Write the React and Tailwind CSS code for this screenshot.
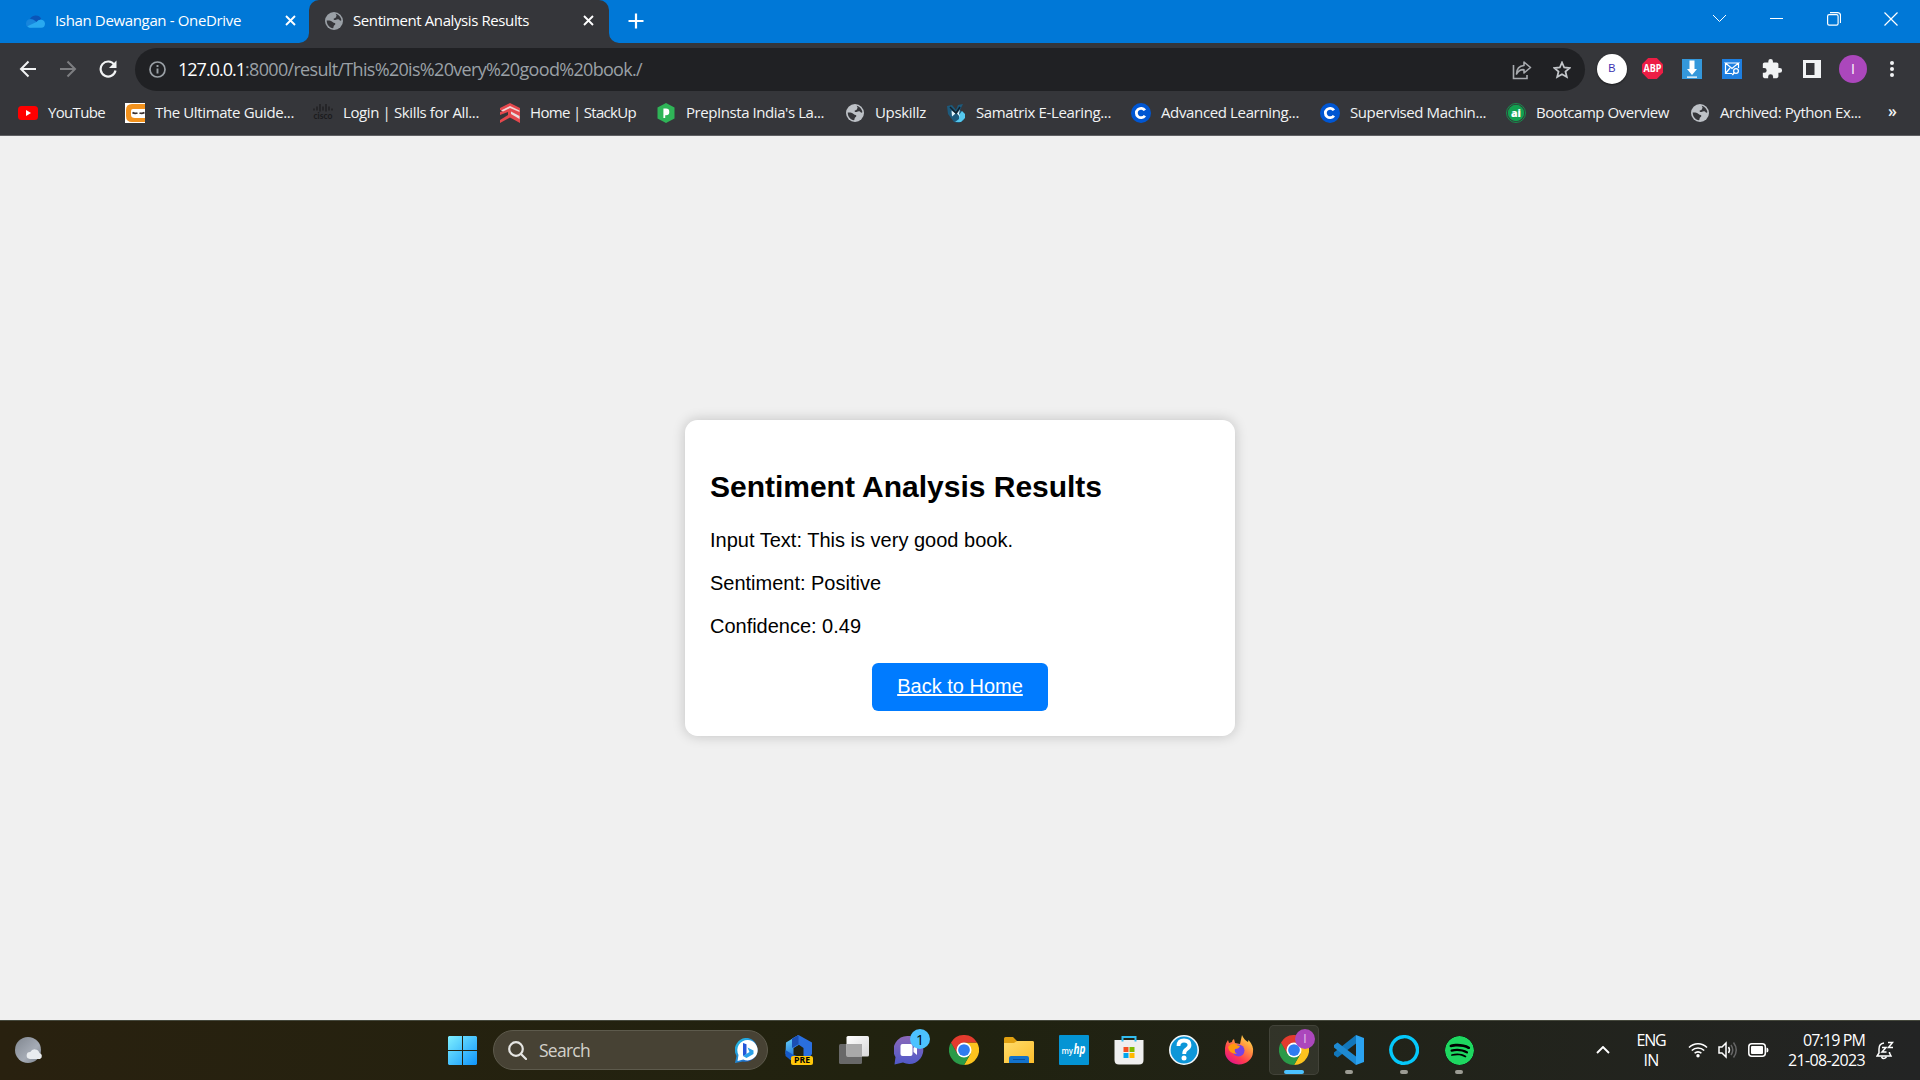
import React, { useLayoutEffect, useRef, useState } from "react";
import { SiSpotify } from "react-icons/si";

function Fit({ w, className = "", children }) {
  const ref = useRef(null);
  const [spacing, setSpacing] = useState(0);
  useLayoutEffect(() => {
    const el = ref.current;
    const n = el.textContent.length;
    if (n > 1) setSpacing((w - el.getBoundingClientRect().width) / n);
  }, [w]);
  return (
    <span ref={ref} className={"inline-block whitespace-pre " + className} style={{ letterSpacing: spacing }}>
      {children}
    </span>
  );
}

const Globe = ({ s = 19, color = "#bdc1c6" }) => (
  <svg width={s} height={s} viewBox="0 0 18 18">
    <circle cx="9" cy="9" r="9" fill={color} />
    <path d="M10.500 1.700c3 .6 5.600 3.200 5.900 6.600-.8.700-1.500.2-2.200-.6-1-.8-2.200-.6-3.200 0-.8.500-1.800.4-2.300-.3-.3-1 .6-1.300 1.600-1.500.6-.2.500-1 .9-1.500.7-.6.200-1.600-.7-2.700z" fill="#35363a" />
    <path d="M1.700 8.600c1.700 0 3.300 0 4.800.7 1 .5 1.300 1.300 2.300 1.400 1.200.1 1.700.6 1.500 1.600-.3 1-1.500 1-1.700 2.200-.1.700-.1 1.300-.6 1.800C4.500 15.900 1.700 12.800 1.700 8.600z" fill="#35363a" />
  </svg>
);

const Chrome = () => (
  <svg width="30" height="30" viewBox="0 0 48 48">
    <path d="M24 12H44.800A24 24 0 0 1 24 48L34.400 30Z" fill="#fcc31e" />
    <path d="M13.600 30 3.200 12A24 24 0 0 0 24 48L34.400 30Z" fill="#2a9a48" />
    <path d="M24 12H44.800A24 24 0 0 0 3.200 12L13.600 30Z" fill="#e33b2e" />
    <circle cx="24" cy="24" r="12" fill="#fff" />
    <circle cx="24" cy="24" r="9.400" fill="#2f7cf0" />
  </svg>
);

const CIcon = () => (
  <svg width="20" height="20" viewBox="0 0 20 20">
    <circle cx="10" cy="10" r="10" fill="#0056d2" />
    <path d="M13.900 7.300A4.700 4.700 0 1 0 13.900 12.700" fill="none" stroke="#fff" strokeWidth="2.800" />
  </svg>
);

const BOOKMARKS = [
  { t: "YouTube", w: 57, box: "w-[107px]", i: (
    <svg width="20" height="20" viewBox="0 0 20 20"><rect y="3" width="20" height="14" rx="3.500" fill="#f00" /><path d="M8 7v6l5-3z" fill="#fff" /></svg>) },
  { t: "The Ultimate Guide...", w: 139, box: "w-[188px]", i: (
    <svg width="20" height="20" viewBox="0 0 20 20"><rect width="20" height="20" fill="#fff" /><path d="M20 1H7Q1 1 1 7v6q0 6 6 6h13v-4H10q-4 0-4-3V8q0-2 2-2h12z" fill="#f2921d" /><path d="M7.500 9.500q2 1.500 5 .5M14.500 10q2.500 1 5-.5" stroke="#3a3030" strokeWidth="1.700" fill="none" /></svg>) },
  { t: "Login | Skills for All...", w: 136, box: "w-[187px]", i: (
    <svg width="20" height="20" viewBox="0 0 20 20"><path d="M1 5.500v2M4 3.500v4M7 1v7.500M10 3.500v4M13 1v7.500M16 3.500v4M19 5.500v2" stroke="#1b1b1d" strokeWidth="1.200" /><text x="0.500" y="15.500" fontSize="8.500" fontWeight="700" fill="#1b1b1d" fontFamily="Lato, sans-serif" textLength="19" lengthAdjust="spacingAndGlyphs">cisco</text></svg>) },
  { t: "Home | StackUp", w: 106, box: "w-[156px]", i: (
    <svg width="20" height="20" viewBox="0 0 20 20"><path d="M0 5 10 0l10 5v15L10 14.500 0 20v-3l8-5V9l-8 3V9l3-1-3-1z" fill="#e5484d" /><path d="M1 7.500 10 3l9.500 4.500v1.500L10 5 3 8.500z" fill="#f0d5d6" /><path d="M11 8.500l8.500 4.500v3l-8.500-5z" fill="#e8dcdd" /></svg>) },
  { t: "PrepInsta India's La...", w: 138, box: "w-[189px]", i: (
    <svg width="20" height="20" viewBox="0 0 20 20"><path d="m10 0 8.500 4.500v11L10 20l-8.500-4.500v-11z" fill="#2fb457" /><path d="M8.300 15V6.500H10a2.300 2.300 0 0 1 0 4.800H9" fill="#fff" stroke="#fff" strokeWidth="1.800" /></svg>) },
  { t: "Upskillz", w: 51, box: "w-[101px]", i: <Globe s={18} /> },
  { t: "Samatrix E-Learing...", w: 135, box: "w-[185px]", i: (
    <svg width="20" height="20" viewBox="0 0 20 20"><path d="M1 3l5-1 4 5 2-5 5-1-3 6 5 4-1 6-5 3-5-1-3-4-3-4z" fill="#1d5a7c" /><path d="M13 12l3-4 3 3v4l-4 4H9l4-3z" fill="#55c8ee" /><path d="M5.500 7.500l4 3-3.500 3zM14 6.500l-3 4 3 3.500-1-3.500z" fill="#e4f5fb" /><path d="M4 4l6 6 4-6" stroke="#14212b" strokeWidth="1.500" fill="none" /></svg>) },
  { t: "Advanced Learning...", w: 138, box: "w-[189px]", i: <CIcon /> },
  { t: "Supervised Machin...", w: 136, box: "w-[186px]", i: <CIcon /> },
  { t: "Bootcamp Overview", w: 133, box: "w-[184px]", i: (
    <svg width="20" height="20" viewBox="0 0 20 20"><circle cx="10" cy="10" r="9.500" fill="none" stroke="#12a150" strokeWidth=".8" /><circle cx="10" cy="10" r="8.200" fill="#12a150" /><text x="5" y="13.800" fontSize="11" fontWeight="800" fill="#fff" fontFamily="Open Sans, sans-serif" textLength="10" lengthAdjust="spacingAndGlyphs">ai</text></svg>) },
  { t: "Archived: Python Ex...", w: 141, box: "w-[192px]", i: <Globe s={18} /> },
];

const X = () => (
  <svg width="11" height="11" viewBox="0 0 11 11"><path d="M1 1l9 9M10 1l-9 9" stroke="#fff" strokeWidth="1.900" /></svg>
);

function TabStrip() {
  return (
    <div className="flex h-[43px] bg-[#0078d7] text-[15px] text-white">
      <div className="flex h-[43px] w-[309px] items-center pl-[26px] pb-[2px]">
        <svg width="19" height="14" viewBox="0 0 20 14"><path d="M4 5.500a6.500 6 0 0 1 12-1L10 9z" fill="#0a55b8" /><path d="M0 10a5 5 0 0 1 7.500-4.500L14 10l-8 4H4.500A4.300 4.300 0 0 1 0 10z" fill="#1785dc" /><path d="M1.500 12.500 11 8q2-2.500 4.800-2.200A4.500 4.500 0 0 1 20 9.500q0 4.500-4 4.500H4q-1.500 0-2.500-1.500z" fill="#29a9f0" /></svg>
        <span className="ml-[10px] w-[230px]"><Fit w={186}>Ishan Dewangan - OneDrive</Fit></span>
        <X />
      </div>
      <div className="relative flex h-[43px] w-[300px] items-center rounded-t-[10px] bg-[#35363a] pb-[2px] pl-[16px]">
        <svg className="absolute bottom-0 -left-[10px]" width="10" height="10"><path d="M10 0v10H0A10 10 0 0 0 10 0z" fill="#35363a" /></svg>
        <svg className="absolute bottom-0 -right-[10px]" width="10" height="10"><path d="M0 0v10h10A10 10 0 0 1 0 0z" fill="#35363a" /></svg>
        <Globe s={18} color="#9aa0a6" />
        <span className="ml-[10px] w-[230px]"><Fit w={176}>Sentiment Analysis Results</Fit></span>
        <X />
      </div>
      <div className="flex w-[54px] items-center justify-center pb-[1px]">
        <svg width="16" height="16"><path d="M8 0.500v15M.5 8h15" stroke="#fff" strokeWidth="2.200" /></svg>
      </div>
      <div className="ml-auto flex h-[37px] items-center">
        <span className="flex w-[57px] justify-center"><svg width="15" height="9" viewBox="0 0 15 9" fill="none" stroke="#fff"><path d="M1 1l6.500 6.500L14 1" /></svg></span>
        <span className="flex w-[57px] justify-center"><svg width="13" height="13" fill="none" stroke="#fff"><path d="M0 6.500h13" /></svg></span>
        <span className="flex w-[57px] justify-center"><svg width="14" height="14" fill="none" stroke="#fff" strokeWidth="1.200"><rect x=".6" y="2.600" width="10.500" height="10.500" rx="1.600" /><path d="M3 .6h7.500a3 3 0 0 1 3 3V11" /></svg></span>
        <span className="flex w-[58px] justify-center"><svg width="14" height="14" fill="none" stroke="#fff" strokeWidth="1.200"><path d="M.5.500l13 13M13.500.500l-13 13" /></svg></span>
      </div>
    </div>
  );
}

function Toolbar() {
  return (
    <div className="flex h-[48px] items-center pt-[5px]">
      <div className="flex w-[135px] items-center pl-[18.5px] pb-[2px]">
        <svg width="18" height="18" viewBox="0 0 18 18" fill="none" stroke="#f1f3f4" strokeWidth="2"><path d="M9.500 1.500 2 9l7.500 7.500M2 9h15" /></svg>
        <svg className="ml-[22px]" width="18" height="18" viewBox="0 0 18 18" fill="none" stroke="#7d7e81" strokeWidth="2"><path d="M8.500 1.500 16 9l-7.500 7.500M16 9H1" /></svg>
        <svg className="ml-[22px]" width="18" height="18" viewBox="0 0 18 18"><path d="M15.300 4.700A7.500 7.500 0 1 0 16.500 10.500" fill="none" stroke="#f1f3f4" strokeWidth="2.200" /><path d="M17.500.500v7.500H10z" fill="#f1f3f4" /></svg>
      </div>
      <div className="flex h-[43px] w-[1450px] items-center rounded-full bg-[#202124] pl-[14px] text-[18px]">
        <svg width="17" height="17" viewBox="0 0 17 17" fill="none" stroke="#9aa0a6" strokeWidth="1.700"><circle cx="8.500" cy="8.500" r="7.500" /><path d="M8.500 7.500v5M8.500 4v2" strokeWidth="1.900" /></svg>
        <div className="ml-[12px] pb-[1px]">
          <Fit w={67} className="text-white">127.0.0.1</Fit>
          <Fit w={397} className="text-[#9aa0a6]">:8000/result/This%20is%20very%20good%20book./</Fit>
        </div>
        <div className="ml-auto flex items-center gap-[21px] pr-[14px]">
          <svg width="20" height="20" viewBox="0 0 20 20" fill="none" stroke="#a8abaf" strokeWidth="1.600"><path d="M1.500 5v13.500H15V15" /><path d="M12 2l6.500 5.500L12 13v-3.300q-5-.4-7.500 4.300.3-8 7.500-8.500z" strokeLinejoin="round" /></svg>
          <svg width="18" height="18" viewBox="0 0 18 18" fill="none" stroke="#c4c7cb" strokeWidth="1.800"><path d="m9 1.500 2.200 5 5.500.5-4.200 3.600 1.300 5.400L9 13.200 4.200 16l1.300-5.400L1.300 7l5.500-.5z" /></svg>
        </div>
      </div>
      <div className="flex flex-1 items-center pb-[2px] pl-[12px]">
        <span className="flex h-[30px] w-[30px] items-center justify-center rounded-full bg-white font-['Liberation_Sans',sans-serif] text-[11px] text-[#3b2fb0] shadow-[0_1px_2px_rgba(0,0,0,0.5)]">B</span>
        <svg className="ml-[15px]" width="21" height="21" viewBox="0 0 21 21"><path d="M6.200 0h8.600L21 6.200v8.600L14.800 21H6.200L0 14.800V6.200z" fill="#ed1e45" /><text x="1.500" y="14.300" fontSize="10.500" fontWeight="700" fill="#fff" fontFamily="Open Sans, sans-serif" textLength="18" lengthAdjust="spacingAndGlyphs">ABP</text></svg>
        <svg className="ml-[19px]" width="20" height="20" viewBox="0 0 20 20"><rect width="20" height="20" fill="#3498db" /><path d="M7.500 1.500h5v8.500H15l-5 6-5-6h2.500zM5 17.500h10v1.300H5z" fill="#fff" /></svg>
        <svg className="ml-[20px]" width="20" height="20" viewBox="0 0 20 20"><rect width="20" height="20" fill="#1e7fe0" /><path d="M3.500 4h13l-6.500 5.500zM3.500 4v10.500H10M3.500 14.500l4.500-5.500M16.500 4v5" stroke="#fff" fill="none" strokeWidth="1.200" /><circle cx="14" cy="12" r="2.400" stroke="#fff" fill="none" strokeWidth="1.200" /><path d="M12.300 13.500l-2 2.500" stroke="#fff" strokeWidth="1.500" /></svg>
        <svg className="ml-[19px]" width="22" height="22" viewBox="0 0 24 24" fill="#f1f3f4"><path d="M20.500 11H19V7c0-1.100-.9-2-2-2h-4V3.500a2.500 2.500 0 0 0-5 0V5H4c-1.100 0-2 .9-2 2v3.800h1.500a2.700 2.700 0 0 1 0 5.400H2V20c0 1.100.9 2 2 2h3.800v-1.500a2.700 2.700 0 0 1 5.400 0V22H17c1.100 0 2-.9 2-2v-4h1.500a2.500 2.500 0 0 0 0-5z" /></svg>
        <svg className="ml-[20px]" width="18" height="18" viewBox="0 0 18 18"><path fillRule="evenodd" d="M0 0h18v18H0zM3 3v12h8.500V3z" fill="#f1f3f4" /></svg>
        <span className="ml-[18px] flex h-[28px] w-[28px] items-center justify-center rounded-full bg-[#ab47bc] text-[14px] text-white">I</span>
        <svg className="ml-[23px]" width="4" height="18"><circle cx="2" cy="3" r="2" fill="#f1f3f4" /><circle cx="2" cy="9" r="2" fill="#f1f3f4" /><circle cx="2" cy="15" r="2" fill="#f1f3f4" /></svg>
      </div>
    </div>
  );
}

function Bookmarks() {
  return (
    <div className="flex h-[45px] items-center border-b border-[#5f6063] pl-[18px] text-[15px] text-[#f1f3f4]">
      {BOOKMARKS.map((b) => (
        <div key={b.t} className={"flex shrink-0 items-center gap-[10px] " + b.box}>
          <span className="flex w-[20px] shrink-0 justify-center">{b.i}</span>
          <Fit w={b.w} className="pb-[2px]">{b.t}</Fit>
        </div>
      ))}
      <span className="ml-[6px] pb-[4px] text-[16px] font-semibold">»</span>
    </div>
  );
}

function Cell({ children, active, mark }) {
  return (
    <div className={"relative mr-[5px] flex h-[50px] w-[50px] shrink-0 items-center justify-center rounded-[5px] " + (active ? "border border-white/8 bg-white/8" : "")}>
      {children}
      {active && <span className="absolute bottom-0 h-[4px] w-[20px] rounded-full bg-[#4cc2ff]" />}
      {mark && <span className="absolute bottom-[1px] h-[4px] w-[8px] rounded-full bg-[#9c9c94]" />}
    </div>
  );
}

function Taskbar() {
  return (
    <div className="flex h-[60px] items-center border-t border-[#45483c] bg-linear-to-r from-[#29210f] via-[#20220f] to-[#232424] pb-[1px]">
      <div className="flex w-[448px] items-center pl-[15px]">
        <svg width="30" height="28" viewBox="0 0 30 28">
          <defs><linearGradient id="moon" x2="1" y2="1"><stop stopColor="#80868f" /><stop offset=".6" stopColor="#a5abb5" /><stop offset="1" stopColor="#7b828c" /></linearGradient></defs>
          <circle cx="13" cy="14" r="13" fill="url(#moon)" />
          <path d="M15 23a3.500 3.500 0 0 1 .3-7 5 5 0 0 1 9.200 1 3.200 3.200 0 0 1 .5 6z" fill="#e9ecef" />
        </svg>
      </div>
      <svg width="29" height="29" viewBox="0 0 29 29">
        <defs><linearGradient id="win" x2="1" y2="1"><stop stopColor="#7ff0ff" /><stop offset="1" stopColor="#0f94fb" /></linearGradient></defs>
        <path d="M1 0h13v14H0V1zM15 0h13l1 1v13H15zM0 15h14v14H1l-1-1zM15 15h14v13l-1 1H15z" fill="url(#win)" />
      </svg>
      <div className="ml-[16px] flex h-[40px] w-[275px] items-center rounded-full border border-[#5d5a4c] bg-[#474234] pl-[14px] pr-[7px]">
        <svg width="19" height="19" viewBox="0 0 19 19" fill="none" stroke="#e6e6e3" strokeWidth="2.200"><circle cx="8" cy="8" r="6.800" /><path d="M13 13l5 5" strokeLinecap="round" /></svg>
        <Fit w={51} className="ml-[12px] text-[17.5px] text-[#d3d1ca]">Search</Fit>
        <svg className="ml-auto" width="25" height="25" viewBox="0 0 25 25">
          <defs><linearGradient id="bing" x2="1" y2="1"><stop stopColor="#27c7e8" /><stop offset="1" stopColor="#1849c4" /></linearGradient></defs>
          <path d="M13 0a12 12 0 1 1-5 23.500L0 25l1.500-7A12 12 0 0 1 13 0z" fill="url(#bing)" />
          <path d="M12.800 2a10.200 10.200 0 1 1-4.500 19.500L2.500 23l1-6A10.200 10.200 0 0 1 12.800 2z" fill="#fff" />
          <path d="M8 5l3.500 1.200v10L8 18z" fill="#2456d8" /><path d="M12.500 9.500l6 3v3.500L11.500 20 8 18l6.500-4z" fill="#2a9fe8" />
        </svg>
      </div>
      <div className="ml-[6px] flex items-center">
        <Cell>
          <svg width="30" height="30" viewBox="0 0 30 30">
            <defs><linearGradient id="m3" x2=".3" y2="1"><stop stopColor="#6fe0fd" /><stop offset="1" stopColor="#1763d6" /></linearGradient></defs>
            <path d="M14.500 0 2 7.500 1.500 19l5 6 8 2 5-4-10-3V13l5-3z" fill="url(#m3)" />
            <path d="M14.500 0 8 3.500 9.500 13l5-3.500 5 3.500v9l4 3 4.500-6V7.500z" fill="#2a6fdf" />
            <path d="M14.500 0 8 4v9l6.500-4z" fill="#1b4fb4" />
            <path d="M1.500 15l8 5 5 3.500-1 3.500-7-2-5-4z" fill="#1559c8" />
            <rect x="7" y="21" width="22" height="9" rx="2" fill="#ffc60a" />
            <text x="10" y="28.400" fontSize="8" fontWeight="700" fontFamily="Open Sans, sans-serif" textLength="16" lengthAdjust="spacingAndGlyphs">PRE</text>
          </svg>
        </Cell>
        <Cell>
          <svg width="30" height="28" viewBox="0 0 30 28">
            <defs><linearGradient id="tv" x2="1" y2="1"><stop stopColor="#fff" /><stop offset="1" stopColor="#d8d8d8" /></linearGradient></defs>
            <rect x="0" y="8" width="23" height="20" rx="1.500" fill="#686868" /><rect x="7.500" y="0" width="22.500" height="20.500" rx="1.500" fill="url(#tv)" /><path d="M7.500 8H23v12.500H7.500z" fill="#a9a9a9" />
          </svg>
        </Cell>
        <Cell>
          <svg width="30" height="30" viewBox="0 0 30 30">
            <defs><linearGradient id="chat" x2="0" y2="1"><stop stopColor="#8b68b8" /><stop offset="1" stopColor="#5059c9" /></linearGradient></defs>
            <path d="M15 1a14 14 0 1 1-6 26.500L.5 29.500l1-7.500A14 14 0 0 1 15 1z" fill="url(#chat)" /><rect x="6.500" y="9" width="12" height="12" rx="2" fill="#fff" /><path d="M19.500 13l3.500-3v10l-3.500-3z" fill="#fff" />
          </svg>
          <span className="absolute top-[4px] right-[4px] flex h-[20px] w-[20px] items-center justify-center rounded-full bg-[#4cc2ff] text-[14px] text-black">1</span>
        </Cell>
        <Cell><Chrome /></Cell>
        <Cell>
          <svg width="30" height="26" viewBox="0 0 30 26">
            <defs><linearGradient id="fold" x2="1" y2="1"><stop stopColor="#ffdc6b" /><stop offset="1" stopColor="#fdbe2c" /></linearGradient></defs>
            <path d="M0 1.500Q0 0 1.500 0H9l4 4h15q2 0 2 2v6H0z" fill="#e0a010" /><path d="M0 6h10l3-2h15.500Q30 4 30 5.500V26H0z" fill="url(#fold)" /><path d="M5 26v-5q0-2 2-2h16q2 0 2 2v5z" fill="#1272cc" /><path d="M9 22.500h12" stroke="#0b4f9c" />
          </svg>
        </Cell>
        <Cell><svg width="30" height="30" viewBox="0 0 30 30"><rect width="30" height="30" rx="1" fill="#0494d4" /><text x="2.500" y="18.500" fontSize="9.500" fontWeight="600" fill="#fff" fontFamily="Open Sans, sans-serif" textLength="11.500" lengthAdjust="spacingAndGlyphs">my</text><text x="14.500" y="19" fontSize="14" fontWeight="700" fontStyle="italic" fill="#fff" fontFamily="Open Sans, sans-serif" textLength="12" lengthAdjust="spacingAndGlyphs">hp</text></svg></Cell>
        <Cell>
          <svg width="30" height="30" viewBox="0 0 30 30"><path d="M.5 5h29v20q0 4.500-4.500 4.500H5Q.5 29.500.5 25z" fill="#efefef" /><path d="M8.500 6.500V2h13v4.500" fill="none" stroke="#32bdf0" strokeWidth="2" /><path d="M9.500 12h5v5h-5z" fill="#f25022" /><path d="M15.500 12h5v5h-5z" fill="#7fba00" /><path d="M9.500 18h5v5h-5z" fill="#00a4ef" /><path d="M15.500 18h5v5h-5z" fill="#ffb900" /></svg>
        </Cell>
        <Cell><svg width="30" height="30" viewBox="0 0 30 30"><circle cx="15" cy="15" r="14.200" fill="#0d96d8" stroke="#f3f7fa" strokeWidth="1.600" /><path d="M9.500 11q0-5.500 5.500-5.500t5.500 4.500q0 2.500-2.800 4.200Q15.200 15.600 15.200 19" fill="none" stroke="#fff" strokeWidth="3.800" /><circle cx="15" cy="23" r="2.500" fill="#fff" /></svg></Cell>
        <Cell>
          <svg width="30" height="30" viewBox="0 0 30 30">
            <defs><linearGradient id="ff" x1="1" y1="0" x2=".3" y2="1"><stop stopColor="#fff44f" /><stop offset=".4" stopColor="#ff9640" /><stop offset=".75" stopColor="#ff3a50" /><stop offset="1" stopColor="#e31587" /></linearGradient></defs>
            <path d="M18 0q2 5 6 7l.5-2Q30 11 29 17A14 13 0 0 1 1 16Q.5 10 4 5l1 3 3-1q0-2 2-3l1 4 5 1z" fill="url(#ff)" /><circle cx="14.500" cy="15.500" r="6" fill="#7542e5" /><path d="M4 12q3-4 7-3 3 2 5 2-1 3-5 3-1 3 2 5-8 0-9-7z" fill="#ff980e" />
          </svg>
        </Cell>
        <Cell active>
          <Chrome />
          <span className="absolute top-[3px] right-[3px] flex h-[20px] w-[20px] items-center justify-center rounded-full bg-[#ab47bc] text-[12px] text-[#e6c6ec]">I</span>
        </Cell>
        <Cell mark>
          <svg width="30" height="30" viewBox="0 0 30 30"><path d="M22 8.500 3.500 22.500 0 20v-2.500L22 0z" fill="#1277bb" /><path d="M22 21.500 3.500 7.500 0 10v2.500L22 30z" fill="#1e8ad2" /><path d="M22 0l8 3v24l-8 3z" fill="#2ba3f1" /></svg>
        </Cell>
        <Cell mark><svg width="30" height="30" viewBox="0 0 30 30"><path d="M12.500 28A13.300 13.300 0 1 1 19 27.700Q15 28 13 29z" fill="none" stroke="#05c8fb" strokeWidth="3.400" /></svg></Cell>
        <Cell mark><SiSpotify className="rounded-full bg-black" size={29} color="#1ed760" /></Cell>
      </div>
      <div className="ml-auto flex items-center text-[16px] leading-[20px] text-white">
        <svg width="14" height="8" viewBox="0 0 14 8" fill="none" stroke="#fff" strokeWidth="1.900"><path d="M1 7l6-6 6 6" /></svg>
        <div className="ml-[24px] flex w-[34px] flex-col items-center"><Fit w={29}>ENG</Fit><Fit w={15}>IN</Fit></div>
        <svg className="ml-[20px]" width="20" height="16" viewBox="0 0 20 16" fill="none" stroke="#fff" strokeWidth="1.600"><path d="M1 5.500a12.700 12.700 0 0 1 18 0M3.800 8.500a8.800 8.800 0 0 1 12.400 0M6.600 11.300a4.800 4.800 0 0 1 6.800 0" /><circle cx="10" cy="13.700" r="1.700" fill="#fff" stroke="none" /></svg>
        <svg className="ml-[10px]" width="20" height="18" viewBox="0 0 20 18" fill="none" stroke="#fff" strokeWidth="1.500"><path d="M1 6v6h3l4 4V2L4 6zM10.500 6q2 3 0 6" /><path d="M13 4q3.500 5 0 10M15.500 1.500q5.500 7.500 0 15" stroke="#666" /></svg>
        <svg className="ml-[10px]" width="21" height="14" viewBox="0 0 21 14"><rect x=".8" y=".8" width="16.500" height="12.400" rx="3" fill="none" stroke="#fff" strokeWidth="1.500" /><rect x="3" y="3" width="12" height="8" rx="1" fill="#fff" /><path d="M18.500 4.500q2 0 2 2.500t-2 2.500z" fill="#fff" /></svg>
        <div className="ml-[19px] flex w-[77px] flex-col items-end pb-[1px]"><Fit w={62}>07:19 PM</Fit><Fit w={77}>21-08-2023</Fit></div>
        <svg className="ml-[11px] mr-[26px]" width="18" height="19" viewBox="0 0 18 19" fill="none" stroke="#fff" strokeWidth="1.500"><path d="M8 2Q3 2.500 3 8v4l-2 3h14l-1.500-3v-1M5.500 16q2 3 5 0" /><path d="M6 6.500h4l-4 4.500h4.500M12 1.500h4.500L12.500 6.500H17" /></svg>
      </div>
    </div>
  );
}

export default function App() {
  return (
    <div className="flex h-[1080px] w-[1920px] flex-col overflow-hidden bg-[#f0f0f0] font-['Open_Sans','Noto_Sans',sans-serif]">
      <header className="h-[136px] shrink-0 bg-[#35363a]">
        <TabStrip />
        <Toolbar />
        <Bookmarks />
      </header>
      <main className="flex flex-1 items-center justify-center font-['Liberation_Sans',Arial,sans-serif]">
        <section className="h-[316px] w-[550px] rounded-[12.5px] bg-white px-[25px] pt-[49px] text-[20px] leading-[23px] text-black shadow-[0_0_12.5px_rgba(0,0,0,0.2)]">
          <h2 className="text-[30px] font-bold leading-[35px]"><Fit w={392}>Sentiment Analysis Results</Fit></h2>
          <p className="mt-[25px]"><Fit w={303}>Input Text: This is very good book.</Fit></p>
          <p className="mt-[20px]"><Fit w={171}>Sentiment: Positive</Fit></p>
          <p className="mt-[20px]"><Fit w={151}>Confidence: 0.49</Fit></p>
          <a className="mx-auto mt-[25px] flex h-[48px] w-[176px] items-center justify-center rounded-[6.25px] bg-[#007bff] pb-[2px] text-white underline">Back to Home</a>
        </section>
      </main>
      <Taskbar />
    </div>
  );
}
